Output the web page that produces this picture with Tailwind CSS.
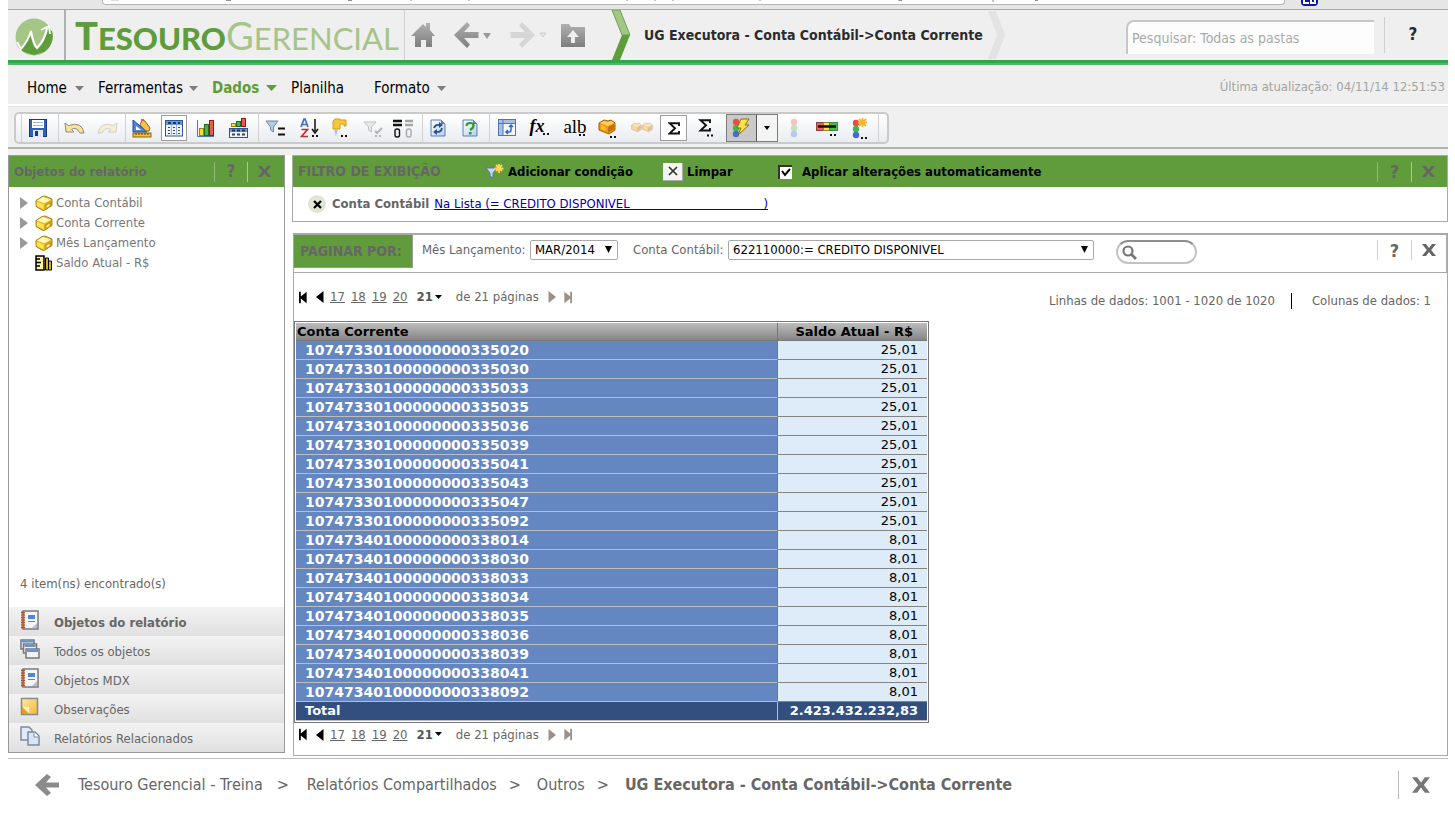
<!DOCTYPE html>
<html lang="pt-BR">
<head>
<meta charset="utf-8">
<title>Tesouro Gerencial</title>
<script src="https://cdn.jsdelivr.net/npm/@tailwindcss/browser@4"></script>
</head>
<body class="bg-white min-h-screen pl-2 pr-[7px] font-['DejaVu_Sans_Condensed','Noto_Sans',sans-serif] text-[#666]">

<!-- shared icon symbols -->
<svg class="absolute h-0 w-0" aria-hidden="true">
  <defs>
    <linearGradient id="gGray" x1="0" y1="0" x2="0" y2="1"><stop offset="0" stop-color="#b0b0b0"/><stop offset="1" stop-color="#7e7e7e"/></linearGradient>
    <linearGradient id="gBlue" x1="0" y1="0" x2="1" y2="1"><stop offset="0" stop-color="#ffffff"/><stop offset="1" stop-color="#b9cdea"/></linearGradient>
    <linearGradient id="gNote" x1="0" y1="0" x2="1" y2="1"><stop offset="0" stop-color="#ffe9a0"/><stop offset="1" stop-color="#f0b93a"/></linearGradient>
  </defs>
  <symbol id="cube" viewBox="0 0 18 16">
    <path d="M1 5.500 7 1.500l3-.5 7 3v6.500L10 15l-2 .5-7-4z" fill="#e8b81c" stroke="#8a6d0a" stroke-width=".8"/>
    <path d="M2 5.500l6-3.700 8 3-6.500 3.500z" fill="#fff9b5"/>
    <path d="M1.800 6.500l7 3v5l-7-3.500z" fill="#fbe250"/>
    <path d="M9.800 9.500 16 6v4.500l-6.200 4z" fill="#c9990f"/>
    <path d="M11.500 10.500l3-1.800v2.300l-3 1.800z" fill="#fff3a0"/>
  </symbol>
  <symbol id="xmark" viewBox="0 0 14 14"><path d="M0 1h4l3 4 3-4h4L9.200 7l4.800 6h-4L7 9l-3 4H0l4.800-6z" fill="currentColor"/></symbol>
  <symbol id="book" viewBox="0 0 20 20">
    <rect x="3" y="1" width="15" height="18" fill="#f4f6fb" stroke="#7a7a7a" stroke-width="1.500"/>
    <rect x="1.500" y="1" width="3" height="18" fill="#c96a3a"/><path d="M1 2.500h4M1 5h4M1 7.500h4M1 10h4M1 12.500h4M1 15h4M1 17.500h4" stroke="#9a5a3a"/>
    <rect x="8" y="5" width="7" height="4" fill="#4f86d6"/><path d="M8 11.500h7" stroke="#4f86d6"/><path d="M12 18l5-5v5z" fill="#b9bfca"/>
  </symbol>
  <symbol id="doc" viewBox="0 0 16 18">
    <path d="M1 1h10l4 4v12H1z" fill="url(#gBlue)" stroke="#5b7fb8"/><path d="M11 1v4h4z" fill="#5b7fb8"/>
  </symbol>
  <symbol id="funnel" viewBox="0 0 14 14"><path d="M1 1h12L8.500 7v5l-3-2V7z" fill="#b7cbe4" stroke="#6f87a8"/></symbol>
  <symbol id="gold" viewBox="0 0 18 16">
    <path d="M1 4 6 1l4 1 3-1 4 3v7l-6 4-10-4z" fill="#ef9b12" stroke="#a55d07"/><path d="M2 4l4-2 4 1 3-1 3 2-6 3z" fill="#ffd257"/><path d="M10 8l6-3v5l-6 4z" fill="#c36f0a"/><path d="M3 6l5 2v4l-5-2z" fill="#ffb938"/>
  </symbol>
  <symbol id="light" viewBox="0 0 8 20"><circle cx="4" cy="4" r="3.200" fill="#ea4b42"/><circle cx="4" cy="10" r="3.200" fill="#43b649"/><circle cx="4" cy="16" r="3.200" fill="#3f6fd0"/></symbol>
  <symbol id="first" viewBox="0 0 10 13"><path d="M0 0h2v5.500L8.500 0v13L2 7.500V13H0z" fill="currentColor"/></symbol>
  <symbol id="tri" viewBox="0 0 8 12"><path d="M7.500 0v12L0 6z" fill="currentColor"/></symbol>
</svg>

<!-- lower edge of the browser frame -->
<div class="flex h-[10px] bg-[#e6e6e6] border-b border-[#a9a9a9]">
  <div class="ml-[94px] h-[5px] w-[1183px] bg-white border border-t-0 border-[#b5b5b5] rounded-b-sm overflow-hidden">
    <svg width="1100" height="3" aria-hidden="true"><path d="M8 0h8" stroke="#bbb"/><path d="M123 0h5M245 0h4M932 0h3M796 0h3" stroke="#222"/><path d="M308 0v1M366 0v1M524 0v1M552 0v1M570 0v1M657 0v1M796 0v1M890 0v2" stroke="#888"/></svg>
  </div>
  <div class="ml-4 h-[6px] w-[17px] bg-[#0a1a9a] rounded-b-sm overflow-hidden"><svg width="17" height="6" aria-hidden="true"><path d="M3 0v3h5M10 0v3h4V0" fill="none" stroke="#fff" stroke-width="2"/></svg></div>
</div>

<header class="flex items-stretch h-[50px] bg-[#efefef]">
  <div class="w-[58px] border-r-2 border-[#b0b0b0] flex items-center justify-center pr-1 pt-[3px]">
    <svg width="38" height="38" viewBox="0 0 38 38" role="img" aria-label="Tesouro Gerencial">
      <circle cx="19" cy="19" r="18.500" fill="#a3c585"/>
      <path d="M1 25l3 4 3 1q5-6 8-13l4 12 4 2q7-8 10-19l4 1a18.500 18.500 0 0 1-8 21l-10 3-10-3q-6-4-8-9z" fill="#5f9c3b"/>
      <path d="M2 24l4 7q7-8 10-18 2 12 6 17 8-8 10-20" fill="none" stroke="#fff" stroke-width="2"/>
      <path d="M26 12l8-4 1 8" fill="none" stroke="#fff" stroke-width="1.800"/>
    </svg>
  </div>
  <div class="ml-[9px] w-[330px] border-r border-[#cfcfcf] flex items-baseline whitespace-nowrap pt-[1px] font-['Lato',sans-serif] leading-[48px]">
    <span class="text-[38px] font-black text-[#5f9c3b]">T</span><span class="text-[31px] font-black text-[#5f9c3b]">ESOURO</span><span class="text-[38px] text-[#a6c48a] font-normal">G</span><span class="text-[31px] text-[#a6c48a] font-normal">ERENCIAL</span>
  </div>
  <nav class="flex items-center" aria-label="Navegação">
    <a href="#" aria-label="Início" class="ml-[5px]"><svg width="26" height="26" viewBox="0 0 26 26"><path d="M1 14 11 4l2-2 3 3V1h4v7l5 6h-3v11h-6v-7h-5v7H5V14z" fill="url(#gGray)"/></svg></a>
    <a href="#" aria-label="Voltar" class="ml-[18px] flex items-center"><svg width="25" height="26" viewBox="0 0 25 26"><path d="M13 0l3 3.500-6 6.500h14.500v6H10l6 6.500-3 3.500L0 13z" fill="url(#gGray)"/></svg><svg class="ml-1" width="9" height="7"><path d="M0 1h8L4 7z" fill="#999"/></svg></a>
    <a href="#" aria-label="Avançar" class="ml-[18px] flex items-center"><svg width="25" height="26" viewBox="0 0 25 26"><path d="M12 0L9 3.500l6 6.500H.5v6H15l-6 6.500 3 3.500 13-13z" fill="#d6d6d6"/></svg><svg class="ml-1" width="9" height="7"><path d="M1 1h6L4 5z" fill="#e6e6e6" stroke="#ccc"/></svg></a>
    <a href="#" aria-label="Subir uma pasta" class="ml-3"><svg width="26" height="26" viewBox="0 0 26 26"><path d="M1 2h8l2 3h14v20H1z" fill="url(#gGray)"/><path d="M13 8l6 7h-4v6h-4v-6H7z" fill="#eee"/></svg></a>
    <svg class="ml-[25px]" width="20" height="50" viewBox="0 0 20 50" aria-hidden="true"><path d="M1 0h8l10 25h-8z" fill="#a3c585" stroke="#6fa34e"/><path d="M19 25 9 50H1l10-25z" fill="#5f9c3b"/></svg>
    <span class="ml-[13px] text-[14px] font-bold text-[#2b2b2b] whitespace-nowrap">UG Executora - Conta Contábil-&gt;Conta Corrente</span>
    <svg class="ml-[4px]" width="20" height="48" viewBox="0 0 20 48" aria-hidden="true"><path d="M1 0h8l9 24-9 24H1l9-24z" fill="#e3e3e3"/></svg>
  </nav>
  <div class="ml-auto flex items-center">
    <input aria-label="Pesquisar" placeholder="Pesquisar: Todas as pastas" class="mt-1 h-[34px] w-[248px] rounded-tl-lg border-t-2 border-l-2 border-[#c6c6c6] bg-[#fdfdfd] pl-1 text-[14px] placeholder:text-[#a9a9a9] placeholder:opacity-100">
    <span class="ml-[10px] h-9 w-px bg-[#cfcfcf]"></span>
    <button aria-label="Ajuda" class="w-[56px] mr-[7px] text-[17px] font-bold text-[#2b2b2b]">?</button>
  </div>
</header>
<div class="h-[5px] border-b-2 border-[#55b56d] bg-[#2fa648]"></div>

<nav class="flex items-center h-[39px] bg-[#efefef] pl-[19px] pt-2 text-[15px] text-black" aria-label="Menu">
  <a href="#" class="flex w-[71px] items-center gap-2">Home <svg width="9" height="5"><path d="M0 0h9L4.500 5z" fill="#7d7d7d"/></svg></a>
  <a href="#" class="flex w-[114px] items-center gap-[6px]">Ferramentas <svg width="9" height="5"><path d="M0 0h9L4.500 5z" fill="#7d7d7d"/></svg></a>
  <a href="#" class="flex w-[79px] items-center gap-[7px] font-bold text-[#5f9c3b]">Dados <svg width="11" height="7"><path d="M0 0h11L5.500 6z" fill="#5f9c3b"/></svg></a>
  <a href="#" class="w-[83px]">Planilha</a>
  <a href="#" class="flex items-center gap-[7px]">Formato <svg width="9" height="5"><path d="M0 0h9L4.500 5z" fill="#7d7d7d"/></svg></a>
  <span class="ml-auto mr-[3px] pb-1 text-[13px] text-[#a3a3a3]">Última atualização: 04/11/14 12:51:53</span>
</nav>

<div class="mt-[2px] bg-[#f0f0f0] pt-[5px] pl-[6px] border-t border-[#e4e4e4]">
  <div role="toolbar" class="flex h-8 w-[875px] items-center rounded-[5px] border-2 border-[#cacaca] bg-linear-to-b from-white to-[#e9ecf1] [&_button]:flex [&_button]:h-[26px] [&_button]:shrink-0 [&_button]:items-center [&_button]:justify-center">
    <span class="ml-[5px] h-7 w-px bg-[#d2d2d2]"></span>
    <button aria-label="Salvar" class="w-8"><svg width="18" height="18" viewBox="0 0 18 18"><rect x=".5" y=".5" width="17" height="17" fill="#2f62b5" stroke="#16397f"/><rect x="3" y="1" width="12" height="8" fill="#fff"/><path d="M4 3.500h10M4 6.500h10" stroke="#9db8e0"/><rect x="4" y="11" width="10" height="7" fill="#dfe8f6"/><rect x="6" y="12" width="3" height="5" fill="#16397f"/></svg></button>
    <span class="ml-1 h-7 w-px bg-[#d2d2d2]"></span>
    <button aria-label="Desfazer" class="w-8"><svg width="22" height="16" viewBox="0 0 22 16"><path d="M1 3l1 9h8L7.500 9.500Q12 6 16 13h4Q18 1 4.500 5.500z" fill="#f9e19a" stroke="#8f8a78"/></svg></button>
    <button aria-label="Refazer" class="w-8 opacity-35"><svg width="22" height="16" viewBox="0 0 22 16"><path d="M21 3l-1 9h-8l2.500-2.500Q10 6 6 13H2Q4 1 17.500 5.500z" fill="#f9e19a" stroke="#8f8a78"/></svg></button>
    <span class="ml-[2px] h-7 w-px bg-[#d2d2d2]"></span>
    <button aria-label="Projeto" class="w-8"><svg width="20" height="19" viewBox="0 0 20 19"><path d="M1 1v12h14z" fill="#4f86dc" stroke="#174a9c"/><path d="M4 7v4h5z" fill="#fff"/><path d="M8 6l2-5 3 1 5 7-1 3-3 0z" fill="#f6bf4d" stroke="#a45e1d"/><path d="M9 1l3 0" stroke="#e25b4a" stroke-width="2"/><rect x="1" y="14" width="18" height="4" fill="#f2c32e" stroke="#8a6412"/><path d="M4 14v2M7 14v2M10 14v2M13 14v2M16 14v2" stroke="#5c420c"/></svg></button>
    <button aria-label="Grade" class="mx-[3px] w-[26px] border border-[#9c9c9c] bg-white"><svg width="18" height="17" viewBox="0 0 18 17"><rect x=".5" y=".5" width="17" height="15.500" fill="#eef3fb" stroke="#2f5597"/><rect x="1" y="1" width="16" height="4" fill="#6e95d4"/><path d="M3 3h3M8 3h3M13 3h2" stroke="#173872" stroke-width="2"/><path d="M6.500 5v11M11.500 5v11" stroke="#98b0d8"/><path d="M3 7.500h2M3 10.500h2M3 13.500h2M8 7.500h2M8 10.500h2M8 13.500h2M13 7.500h2M13 10.500h2M13 13.500h2" stroke="#444"/></svg></button>
    <button aria-label="Gráfico" class="w-8"><svg width="18" height="18" viewBox="0 0 18 18"><path d="M.5 1v16.500H17" fill="none" stroke="#4a76b8"/><rect x="2.500" y="9.500" width="4" height="7" fill="#ffd83c" stroke="#b37b00"/><rect x="7.500" y="5.500" width="4" height="11" fill="#49b348" stroke="#1b6b1c"/><rect x="12.500" y="1.500" width="4" height="15" fill="#f0584d" stroke="#a80f0f"/></svg></button>
    <button aria-label="Grade e gráfico" class="w-8"><svg width="19" height="20" viewBox="0 0 19 20"><rect x="2.500" y="5.500" width="4" height="3" fill="#ffd83c" stroke="#b37b00"/><rect x="7.500" y="3.500" width="4" height="5" fill="#49b348" stroke="#1b6b1c"/><rect x="12.500" y=".5" width="4" height="8" fill="#f0584d" stroke="#a80f0f"/><rect x=".5" y="10.500" width="18" height="9" fill="#eef3fb" stroke="#2f5597"/><rect x="1" y="11" width="17" height="3" fill="#6e95d4"/><path d="M3 12.500h3M8 12.500h3M13 12.500h3" stroke="#173872" stroke-width="2"/><path d="M3 16.500h3M8 16.500h3M13 16.500h3" stroke="#444" stroke-width="2"/></svg></button>
    <span class="ml-1 h-7 w-px bg-[#d2d2d2]"></span>
    <button aria-label="Filtro" class="w-8"><svg width="21" height="18" viewBox="0 0 21 18"><use href="#funnel" x="0" y="1" width="14" height="14"/><path d="M13 9.500h7M13 15.500h7" stroke="#111" stroke-width="2"/></svg></button>
    <button aria-label="Classificar" class="ml-px w-8 pl-1"><svg width="20" height="20" viewBox="0 0 20 20"><path d="M1 9l3-8h1l3 8M2.500 6.500h4" fill="none" stroke="#3b6fc4" stroke-width="1.700"/><path d="M1.500 11.500h6l-6 7h6.500" fill="none" stroke="#c0302c" stroke-width="1.700"/><path d="M15 1v12M12 11l3 4 3-4" fill="none" stroke="#111" stroke-width="1.500"/><path d="M12 18h2M16 18h2" stroke="#111" stroke-width="2"/></svg></button>
    <button aria-label="Detalhar" class="w-[31px]"><svg width="18" height="20" viewBox="0 0 18 20"><path d="M2 3l2-2h5v1h6v6h-2V6H9v5H2z" fill="#f5c53a" stroke="#d79c14"/><path d="M3 11h4l-2 8z" fill="#aac4e8"/><path d="M10 18h2M14 18h2" stroke="#111" stroke-width="2"/></svg></button>
    <button aria-label="Filtro de seleção" class="w-8 pl-1 opacity-50"><svg width="20" height="18" viewBox="0 0 20 18"><path d="M1 3h12L8.500 8v5l-3-2V8z" fill="#ddd" stroke="#888"/><path d="M12 12l2 2 5-5M12 17h2M16 17h2" fill="none" stroke="#777" stroke-width="2"/></svg></button>
    <button aria-label="Formato numérico" class="w-8"><svg width="22" height="19" viewBox="0 0 22 19"><path d="M1 2h9M1 6h9" stroke="#111" stroke-width="2.500"/><path d="M13 2h8M13 6h8" stroke="#a5a5a5" stroke-width="2.500"/><rect x="3" y="10" width="4.500" height="8" rx="2" fill="none" stroke="#111" stroke-width="1.400"/><rect x="14.500" y="10" width="4.500" height="8" rx="2" fill="none" stroke="#aaa" stroke-width="1.400"/></svg></button>
    <span class="ml-[3px] h-7 w-px bg-[#d2d2d2]"></span>
    <button aria-label="Atualizar" class="w-[30px]"><svg width="16" height="18" viewBox="0 0 16 18"><use href="#doc"/><path d="M4 9q1-4 6-3M12 9q-1 5-6 3.500" fill="none" stroke="#2c4f8f" stroke-width="1.800"/><path d="M9 3l4 3-4 3zM7 10l-4 3 4 3z" fill="#2c4f8f"/></svg></button>
    <button aria-label="Solicitar" class="w-[34px]"><svg width="16" height="18" viewBox="0 0 16 18"><use href="#doc"/><path d="M4.500 7q0-3 3.500-3t3.500 2.500T8 11" fill="none" stroke="#2a9a2a" stroke-width="2.200"/><path d="M7 13h2.500v2.500H7z" fill="#2a9a2a"/></svg></button>
    <span class="ml-[2px] h-7 w-px bg-[#d2d2d2]"></span>
    <button aria-label="Trocar eixos" class="w-[33px]"><svg width="18" height="18" viewBox="0 0 18 18"><rect x=".5" y=".5" width="17" height="16" fill="#f2f6fd" stroke="#4d78b8"/><path d="M1 1h16v3H1zM1 1h4v15H1z" fill="#a9c0e6"/><path d="M5 .5V17M.5 4.500h17" stroke="#4d78b8"/><path d="M13 7v4q0 2-2 2H8M11 8l2-2 2 2M10 11l-2 2 2 2" fill="none" stroke="#2c6ad0" stroke-width="1.500"/></svg></button>
    <button aria-label="Inserir métrica" class="w-[33px] pb-1 font-['Liberation_Serif',serif] text-[18px] font-bold italic leading-4 text-black">fx<svg class="-ml-[2px] mt-4" width="7" height="3"><path d="M0 1h2M4 1h2" stroke="#111" stroke-width="2"/></svg></button>
    <button aria-label="Renomear" class="w-[33px] pl-1 pb-[2px] font-['Liberation_Serif',serif] text-[19px] leading-5 text-black">alb<svg class="-ml-2 mt-4" width="7" height="3"><path d="M0 1h2M4 1h2" stroke="#111" stroke-width="2"/></svg></button>
    <button aria-label="Objetos" class="w-[33px] pl-1"><svg width="19" height="19" viewBox="0 0 19 19"><use href="#gold" width="18" height="16"/><path d="M12 18h2M16 18h2" stroke="#111" stroke-width="2"/></svg></button>
    <button aria-label="Agrupar" class="w-[35px] pl-1 opacity-40"><svg width="22" height="12" viewBox="0 0 22 12"><use href="#gold" width="11" height="11"/><use href="#gold" x="11" width="11" height="11"/></svg></button>
    <button aria-label="Totais" class="mx-[3px] w-[27px] border border-[#9c9c9c] bg-white"><svg width="12" height="13" viewBox="0 0 12 13"><path d="M11 4V1.200H1.500L7 6.200 1.500 11.500H11V9" fill="none" stroke="#111" stroke-width="1.900"/></svg></button>
    <button aria-label="Subtotais" class="w-8"><svg width="16" height="18" viewBox="0 0 16 18"><path d="M12 4V1.200H2.500L8 6.200 2.500 11.500H12V9" fill="none" stroke="#111" stroke-width="1.900"/><path d="M9 16.500h2M13 16.500h2" stroke="#111" stroke-width="2"/></svg></button>
    <div class="ml-1 flex border border-[#7c7c7c]">
      <button aria-label="Limites" class="w-[29px] bg-[#c9c9c9]"><svg width="20" height="20" viewBox="0 0 20 20"><use href="#light" x="0" width="8" height="20"/><path d="M9 1h8l-4 6h4L6 17l3-7H5z" fill="#ffe14a" stroke="#8e6d05"/></svg></button>
      <button aria-label="Opções de limites" class="w-[21px] border-l border-[#555] bg-[#f4f4f4]"><svg width="6" height="4"><path d="M0 0h6L3 4z" fill="#000"/></svg></button>
    </div>
    <button aria-label="Alternar limites" class="w-8 opacity-30"><svg width="8" height="20"><use href="#light" width="8" height="20"/></svg></button>
    <button aria-label="Legenda" class="w-[33px]"><svg width="22" height="16" viewBox="0 0 22 16"><rect x=".5" y="2.500" width="7" height="8" fill="#ee5d5d" stroke="#844"/><rect x="7.500" y="2.500" width="6" height="8" fill="#f4e34a" stroke="#884"/><rect x="13.500" y="2.500" width="8" height="8" fill="#48bd4b" stroke="#484"/><path d="M2 6.500h18" stroke="#111" stroke-width="2.500"/><path d="M14 15h2M18 15h2" stroke="#111" stroke-width="2"/></svg></button>
    <button aria-label="Novo limite" class="w-[33px]"><svg width="16" height="21" viewBox="0 0 16 21"><use href="#light" y="1" width="8" height="20"/><path d="M10.500 0v9M6 4.500h9M7 1l7 7M14 1L7 8" stroke="#f3b62a" stroke-width="1.800"/><path d="M9 20h2M13 20h2" stroke="#111" stroke-width="2"/></svg></button>
    <span class="ml-[2px] h-7 w-px bg-[#d2d2d2]"></span>
  </div>
  <div class="-ml-[6px] mt-[3px] h-2 border-t-2 border-[#b2b2b2]"></div>
</div>

<main class="flex gap-[7px]">
  <!-- object browser -->
  <aside class="flex w-[277px] shrink-0 flex-col self-start min-h-[598px] border border-[#999]">
    <div class="flex h-[31px] items-center bg-[#609c3b] pl-[5px] text-[13px] font-bold">
      <h2>Objetos do relatório</h2>
      <span class="ml-auto h-5 w-px bg-[#8fbb76]"></span>
      <button aria-label="Ajuda" class="w-8 text-[17px]">?</button>
      <span class="h-5 w-px bg-[#a9c898]"></span>
      <button aria-label="Fechar" class="flex w-8 justify-center mr-1"><svg width="13" height="13"><use href="#xmark" width="13" height="13"/></svg></button>
    </div>
    <ul class="mt-[6px] pl-[11px] text-[13px] text-[#777] [&_li]:flex [&_li]:h-5 [&_li]:items-center">
      <li><svg width="9" height="12"><path d="M0 0l8 6-8 6z" fill="#999"/></svg><svg class="ml-[6px] mr-[3px]" width="18" height="16"><use href="#cube"/></svg>Conta Contábil</li>
      <li><svg width="9" height="12"><path d="M0 0l8 6-8 6z" fill="#999"/></svg><svg class="ml-[6px] mr-[3px]" width="18" height="16"><use href="#cube"/></svg>Conta Corrente</li>
      <li><svg width="9" height="12"><path d="M0 0l8 6-8 6z" fill="#999"/></svg><svg class="ml-[6px] mr-[3px]" width="18" height="16"><use href="#cube"/></svg>Mês Lançamento</li>
      <li><svg class="ml-[15px] mr-[3px]" width="18" height="16" viewBox="0 0 18 16"><path d="M1 1h8v14H1z" fill="#fbf3a0" stroke="#000" stroke-width="1.500"/><path d="M1 4h4M1 7.500h5M1 11h4" stroke="#000" stroke-width="1.500"/><path d="M10.500 3h3v12h-3zM13.500 6h3v9h-3z" fill="#e5a91c" stroke="#000"/></svg>Saldo Atual - R$</li>
    </ul>
    <p class="mt-auto mb-[14px] pl-[11px] text-[13px]">4 item(ns) encontrado(s)</p>
    <nav class="text-[13px] [&_a]:flex [&_a]:h-[29px] [&_a]:items-center [&_a]:bg-linear-to-b [&_a]:from-[#f3f3f3] [&_a]:to-[#e0e0e0] [&_a]:pt-[3px] [&_a]:pl-[11px] [&_svg]:mr-[14px] [&_svg]:mb-[6px]" aria-label="Painéis">
      <a href="#" class="font-bold"><svg width="20" height="20"><use href="#book"/></svg>Objetos do relatório</a>
      <a href="#"><svg width="20" height="20" viewBox="0 0 20 20"><g stroke="#777" fill="#f2f2f2" stroke-width="1.500"><rect x="1" y="1" width="13" height="9"/><rect x="3.500" y="5" width="13" height="9"/><rect x="6" y="10" width="13" height="9"/></g><path d="M2 2.500h11M4.500 7h11M7 12h11" stroke="#5d94dc" stroke-width="2"/></svg>Todos os objetos</a>
      <a href="#"><svg width="20" height="20"><use href="#book"/></svg>Objetos MDX</a>
      <a href="#"><svg width="20" height="20" viewBox="0 0 20 20"><rect x="1.500" y="1.500" width="16" height="16" fill="url(#gNote)" stroke="#8a8a8a" stroke-width="1.500"/><path d="M2 10l7 7H2z" fill="#f09a1a"/><path d="M3 10h6v6z" fill="#fff3c4"/></svg>Observações</a>
      <a href="#"><svg width="20" height="20" viewBox="0 0 20 20"><path d="M1 1h8l3 3v10H1z" fill="#dfeafa" stroke="#7d8a9c" stroke-width="1.500"/><path d="M8 6h7l4 4v9H8z" fill="#d5e6fb" stroke="#7d8a9c" stroke-width="1.500"/><path d="M14 6v5h5" fill="#fff" stroke="#7d8a9c"/></svg>Relatórios Relacionados</a>
    </nav>
  </aside>

  <div class="min-w-0 flex-1">
    <!-- view filter -->
    <section class="border border-[#a9a9a9]">
      <div class="flex h-[31px] items-center bg-[#609c3b] pl-[5px] text-[13px] font-bold text-black">
        <h2 class="w-[187px] text-[14px] text-[#666]">FILTRO DE EXIBIÇÃO</h2>
        <button class="flex w-[178px] items-center gap-1"><svg width="19" height="16" viewBox="0 0 19 16"><path d="M1 4h11L8 9v5l-3-2V9z" fill="#c5d8f0" stroke="#5577a8"/><path d="M14 0v9M9.500 4.500h9M11 1l6 6M17 1l-6 6" stroke="#ffd75a" stroke-width="1.800"/></svg>Adicionar condição</button>
        <button class="flex w-[115px] items-center gap-1"><span class="flex h-[18px] w-5 items-center justify-center border-r border-b border-[#aaa] bg-[#f4f4f4]"><svg width="12" height="12"><path d="M2 2l8 8M10 2l-8 8" stroke="#333" stroke-width="1.700"/></svg></span>Limpar</button>
        <label class="flex items-center gap-[10px]"><span class="relative h-[14px] w-[14px]"><input type="checkbox" checked class="block h-[14px] w-[14px] appearance-none border-t-2 border-l-2 border-[#333] bg-white"><svg class="pointer-events-none absolute inset-0" width="14" height="14"><path d="M4 6l3 4 5-6" fill="none" stroke="#000" stroke-width="2"/></svg></span>Aplicar alterações automaticamente</label>
        <span class="ml-auto h-5 w-px bg-[#8fbb76]"></span>
        <button aria-label="Ajuda" class="w-[33px] text-[18px] text-[#666]">?</button>
        <span class="h-5 w-px bg-[#a9c898]"></span>
        <button aria-label="Fechar" class="mr-[2px] flex w-[33px] justify-center text-[#666]"><svg width="13" height="13"><use href="#xmark" width="13" height="13"/></svg></button>
      </div>
      <div class="flex h-[34px] items-center pl-[15px] text-[13px]">
        <button aria-label="Remover condição" class="mr-[6px] flex h-[18px] w-[18px] items-center justify-center rounded-full bg-[#e3e4d6]"><svg width="9" height="9"><path d="M1 1l7 7M8 1L1 8" stroke="#000" stroke-width="2.200"/></svg></button>
        <b class="mr-[5px]">Conta Contábil</b>
        <a href="#" class="whitespace-pre text-[#00009c] underline">Na Lista (= CREDITO DISPONIVEL                                    )</a>
      </div>
    </section>

    <!-- report -->
    <section class="mt-[11px] ml-px border border-[#a9a9a9] pb-[10px]">
      <div class="flex h-[39px] items-start border-t border-r border-b border-[#a9a9a9] text-[13px]">
        <h2 class="flex h-[33px] w-[119px] items-center border-r border-b border-[#999] bg-[#609c3b] pl-[6px] text-[14px] font-bold">PAGINAR POR:</h2>
        <div class="flex h-[30px] flex-1 items-center pl-[9px]">
          <label for="mes" class="w-[108px] whitespace-nowrap">Mês Lançamento:</label>
          <div class="relative"><select id="mes" class="block h-5 w-[88px] appearance-none rounded-[2px] border border-[#a9a9a9] bg-white pl-1 text-[13px] leading-[18px] text-black"><option>MAR/2014</option></select><svg class="pointer-events-none absolute right-[6px] top-[6px]" width="7" height="7"><path d="M0 0h7L3.500 7z" fill="#000"/></svg></div>
          <label for="conta" class="ml-[15px] w-[95px] whitespace-nowrap">Conta Contábil:</label>
          <div class="relative"><select id="conta" class="block h-5 w-[366px] appearance-none rounded-[2px] border border-[#a9a9a9] bg-white pl-1 text-[13px] leading-[18px] text-black"><option>622110000:= CREDITO DISPONIVEL</option></select><svg class="pointer-events-none absolute right-[6px] top-[6px]" width="7" height="7"><path d="M0 0h7L3.500 7z" fill="#000"/></svg></div>
          <div class="relative ml-[22px] mt-1"><input type="search" aria-label="Localizar" class="block h-6 w-[81px] rounded-full border-2 border-[#c2c2c2] border-t-[#8e8e8e] bg-white pl-6"><svg class="pointer-events-none absolute left-[6px] top-[5px]" width="15" height="15"><circle cx="6" cy="6" r="4.500" fill="none" stroke="#777" stroke-width="2.200"/><path d="M9 9l5 5" stroke="#777" stroke-width="2.800"/></svg></div>
          <span class="ml-auto h-5 w-px bg-[#cfcfcf]"></span>
          <button aria-label="Ajuda" class="w-[33px] text-[18px] font-bold">?</button>
          <span class="h-5 w-px bg-[#cfcfcf]"></span>
          <button aria-label="Fechar" class="mr-px flex w-[33px] justify-center"><svg width="14" height="14"><use href="#xmark" width="14" height="14"/></svg></button>
        </div>
      </div>
      <div class="flex h-[48px] text-[13px]">
        <nav class="flex h-12 items-center pl-[5px] text-black [&_a]:mr-[6px] [&_a]:text-[#666] [&_a]:underline" aria-label="Páginas, acima">
          <button aria-label="Primeira página" class="mr-2"><svg width="9" height="13"><use href="#first" width="9" height="13"/></svg></button><button aria-label="Página anterior" class="mr-[6px]"><svg width="8" height="12"><use href="#tri"/></svg></button>
          <a href="#">17</a><a href="#">18</a><a href="#">19</a><a href="#">20</a>
          <b class="ml-[3px] text-[#555]">21</b><svg class="mr-[14px] ml-[2px]" width="7" height="5"><path d="M0 0h7L3.500 4z" fill="#000"/></svg><span class="text-[#666]">de 21 páginas</span>
          <svg class="ml-[9px] rotate-180" width="8" height="12" color="#9b9088"><use href="#tri"/></svg><svg class="ml-[7px] rotate-180" width="9" height="13" color="#9b9088"><use href="#first" width="9" height="13"/></svg>
        </nav>
        <p class="ml-auto mr-[16px] flex items-center pt-[8px]"><span>Linhas de dados: 1001 - 1020 de 1020</span><span class="ml-4 mr-5 h-4 w-px bg-black"></span><span>Colunas de dados: 1</span></p>
      </div>
      <table class="w-[635px] table-fixed border-separate border-spacing-0 border border-[#777] p-px text-left text-[13px] [&_th]:h-[19px] [&_th]:border-b [&_th]:py-0 [&_th]:leading-[18px] [&_td]:h-[19px] [&_td]:border-b [&_td]:border-[#848484] [&_td]:bg-[#deebf9] [&_td]:py-0 [&_td]:pr-[9px] [&_td]:text-right [&_td]:leading-[18px] [&_td]:text-black font-['DejaVu_Sans',sans-serif] [&_thead_th]:h-[18px] [&_thead_th]:leading-[17px] [&_tbody_th]:border-r [&_tbody_th]:border-[#bdbdbd] [&_tbody_th]:border-r-[#777] [&_tbody_th]:bg-[#6587c1] [&_tbody_th]:pl-[9px] [&_tbody_th]:text-[14px] [&_tbody_th]:text-white">
        <thead class="text-black"><tr class="bg-linear-to-b from-[#bdbdbd] to-[#838383]"><th class="w-[482px] border-r border-[#777] pl-px">Conta Corrente</th><th class="border-[#777] pr-[14px] text-right">Saldo Atual - R$</th></tr></thead>
        <tbody>
          <tr><th>10747330100000000335020</th><td>25,01</td></tr>
          <tr><th>10747330100000000335030</th><td>25,01</td></tr>
          <tr><th>10747330100000000335033</th><td>25,01</td></tr>
          <tr><th>10747330100000000335035</th><td>25,01</td></tr>
          <tr><th>10747330100000000335036</th><td>25,01</td></tr>
          <tr><th>10747330100000000335039</th><td>25,01</td></tr>
          <tr><th>10747330100000000335041</th><td>25,01</td></tr>
          <tr><th>10747330100000000335043</th><td>25,01</td></tr>
          <tr><th>10747330100000000335047</th><td>25,01</td></tr>
          <tr><th>10747330100000000335092</th><td>25,01</td></tr>
          <tr><th>10747340100000000338014</th><td>8,01</td></tr>
          <tr><th>10747340100000000338030</th><td>8,01</td></tr>
          <tr><th>10747340100000000338033</th><td>8,01</td></tr>
          <tr><th>10747340100000000338034</th><td>8,01</td></tr>
          <tr><th>10747340100000000338035</th><td>8,01</td></tr>
          <tr><th>10747340100000000338036</th><td>8,01</td></tr>
          <tr><th>10747340100000000338039</th><td>8,01</td></tr>
          <tr><th>10747340100000000338041</th><td>8,01</td></tr>
          <tr><th>10747340100000000338092</th><td>8,01</td></tr>
        </tbody>
        <tfoot><tr class="font-bold text-white"><th class="border-r border-[#bdbdbd] bg-[#324f80] pl-[9px]">Total</th><th class="border-[#bdbdbd] bg-[#324f80] pr-[9px] text-right">2.423.432.232,83</th></tr></tfoot>
      </table>
      <nav class="flex h-[22px] items-center pl-[5px] pt-px text-[13px] text-black [&_a]:mr-[6px] [&_a]:text-[#666] [&_a]:underline" aria-label="Páginas, abaixo">
        <button aria-label="Primeira página" class="mr-2"><svg width="9" height="13"><use href="#first" width="9" height="13"/></svg></button><button aria-label="Página anterior" class="mr-[6px]"><svg width="8" height="12"><use href="#tri"/></svg></button>
        <a href="#">17</a><a href="#">18</a><a href="#">19</a><a href="#">20</a>
        <b class="ml-[3px] text-[#555]">21</b><svg class="mr-[14px] ml-[2px]" width="7" height="5"><path d="M0 0h7L3.500 4z" fill="#000"/></svg><span class="text-[#666]">de 21 páginas</span>
        <svg class="ml-[9px] rotate-180" width="8" height="12" color="#9b9088"><use href="#tri"/></svg><svg class="ml-[7px] rotate-180" width="9" height="13" color="#9b9088"><use href="#first" width="9" height="13"/></svg>
      </nav>
    </section>
  </div>
</main>

<footer class="mt-[2px] flex h-[53px] items-center border-t border-[#bdbdbd] pl-[26px] text-[16px]">
  <a href="#" aria-label="Voltar" class="mr-[18px]"><svg width="26" height="24" viewBox="0 0 26 24"><path d="M13 1l4 3-5 5.500h13v5H12L17 20l-4 3L1 12z" fill="#8b8b8b"/></svg></a>
  <a href="#">Tesouro Gerencial - Treina</a><span class="mx-[14px]">&gt;</span>
  <a href="#" class="ml-1">Relatórios Compartilhados</a><span class="mx-3">&gt;</span>
  <a href="#" class="ml-1">Outros</a><span class="mx-3">&gt;</span>
  <b class="ml-1">UG Executora - Conta Contábil-&gt;Conta Corrente</b>
  <span class="ml-auto h-7 w-px bg-[#bbb]"></span>
  <button aria-label="Fechar" class="mr-[18px] ml-[13px]"><svg width="18" height="18" color="#777"><use href="#xmark" width="18" height="18"/></svg></button>
</footer>
</body>
</html>
